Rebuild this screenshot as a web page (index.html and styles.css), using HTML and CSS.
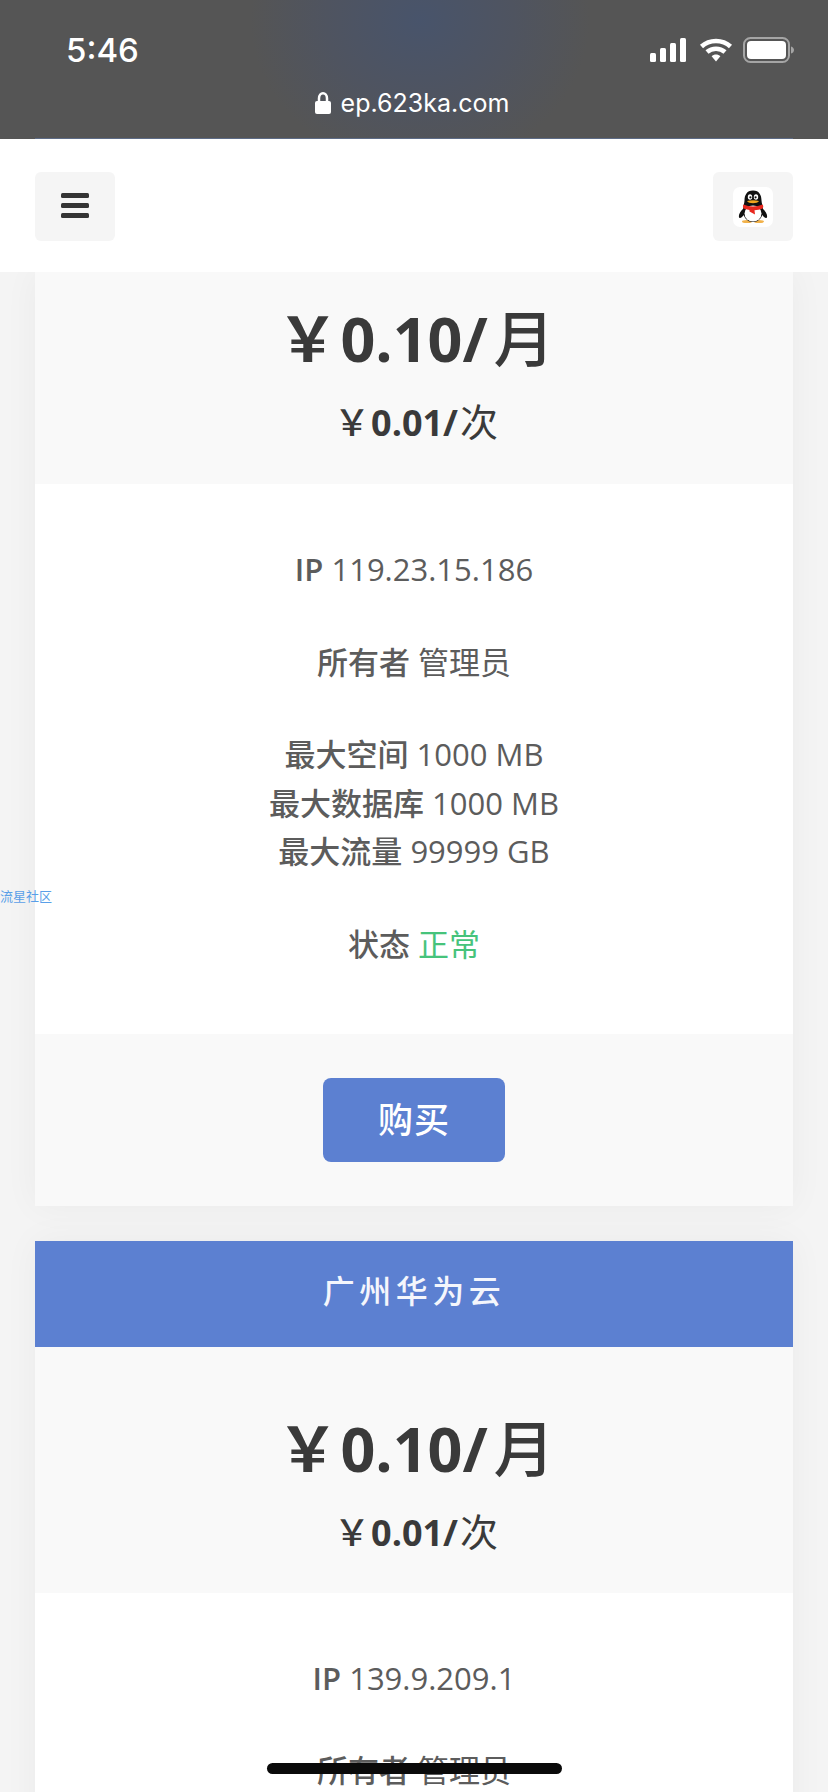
FILE: index.html
```html
<!DOCTYPE html>
<html lang="zh">
<head>
<meta charset="utf-8">
<title>ep.623ka.com</title>
<link rel="stylesheet" href="styles.css">
</head>
<body>
<div class="status">
  <div class="status-row">
    <span class="time">5:46</span>
    <div class="status-icons">
      <svg width="40" height="26" viewBox="0 0 40 26"><rect x="1" y="16" width="6" height="9" rx="1.5"/><rect x="11" y="11" width="6" height="14" rx="1.5"/><rect x="21" y="6" width="6" height="19" rx="1.5"/><rect x="31" y="1" width="6" height="24" rx="1.5"/></svg>
      <svg width="34" height="26" viewBox="0 0 34 26"><path class="wifi" d="M2.5 9.5C10.5 2 23.5 2 31.5 9.5"/><path class="wifi" d="M8 15C13 10.5 21 10.5 26 15"/><path d="M12.6 19.2C15 17 19 17 21.4 19.2L17 24.5Z"/></svg>
      <svg width="52" height="26" viewBox="0 0 52 26"><rect class="bat-frame" x="1" y="1" width="45" height="24" rx="6.5"/><rect x="4" y="4" width="39" height="18" rx="4"/><path class="bat-cap" d="M48 9.5C50 10 51 11.500 51 13C51 14.500 50 16 48 16.500Z"/></svg>
    </div>
  </div>
  <div class="address">
    <svg width="16" height="22" viewBox="0 0 16 22"><path class="lock-loop" d="M4 10V6.500C4 -0.500 12 -0.500 12 6.500V10"/><rect x="0" y="9" width="16" height="13" rx="2"/></svg>
    <span>ep.623ka.com</span>
  </div>
</div>
<header class="topbar">
  <button class="tool" type="button" aria-label="菜单">
    <span class="bars"><i></i><i></i><i></i></span>
  </button>
  <button class="tool" type="button" aria-label="QQ">
    <span class="qq">
      <svg width="30" height="33" viewBox="0 0 30 33">
        <ellipse cx="9" cy="31.500" rx="5" ry="1.500" fill="#f2b24a"/>
        <ellipse cx="21" cy="31.500" rx="5" ry="1.500" fill="#f2b24a"/>
        <path d="M6 18C1 22 0 27 1.500 28C3 28.500 5 26 6.500 24ZM24 18C29 22 30 27 28.500 28C27 28.500 25 26 23.500 24Z" fill="#111"/>
        <path d="M15 0.500C8.500 0.500 6.500 5.500 6.500 10.500C6.500 13 5 16 5 21C5 27 9 32 15 32C21 32 25 27 25 21C25 16 23.500 13 23.500 10.500C23.500 5.500 21.500 0.500 15 0.500Z" fill="#111"/>
        <ellipse cx="15" cy="23.500" rx="8.500" ry="8" fill="#fff"/>
        <ellipse cx="12" cy="7" rx="2.200" ry="2.800" fill="#fff"/>
        <ellipse cx="18" cy="7" rx="2.200" ry="2.800" fill="#fff"/>
        <circle cx="12.400" cy="7.300" r="1.100" fill="#111"/>
        <circle cx="17.600" cy="7.300" r="1.100" fill="#111"/>
        <path d="M9 11C12.500 10 17.500 10 21 11C19.500 14 10.500 14 9 11Z" fill="#f2a51f"/>
        <path d="M5.500 14.500C11 17 19 17 24.500 14.500C25.500 15.500 25.500 17.500 24.500 18.500C22 19.500 19 20 16.500 20.300L17 24.500L11.500 21.500L11.500 20C9 19.500 7 19 5.500 18.500C4.800 17.500 4.800 15.500 5.500 14.500Z" fill="#e8281f"/>
      </svg>
    </span>
  </button>
</header>
<main class="viewport">
  <span class="floating-link">流星社区</span>
  <div class="content">
    <section class="card">
      <div class="price price-clipped">
        <div class="price-month"><span class="yen">&#xFFE5;</span><b>0.10/</b><span class="unit">月</span></div>
        <div class="price-once"><span class="yen">&#xFFE5;</span><b>0.01/</b><span class="unit">次</span></div>
      </div>
      <div class="info">
        <p><b class="latin">IP</b> 119.23.15.186</p>
        <p><b>所有者</b> 管理员</p>
        <p><b>最大空间</b> 1000 MB<br><b>最大数据库</b> 1000 MB<br><b>最大流量</b> 99999 GB</p>
        <p><b>状态</b> <span class="ok">正常</span></p>
      </div>
      <div class="actions"><a class="buy">购买</a></div>
    </section>
    <section class="card">
      <h2 class="card-title">广州华为云</h2>
      <div class="price">
        <div class="price-month"><span class="yen">&#xFFE5;</span><b>0.10/</b><span class="unit">月</span></div>
        <div class="price-once"><span class="yen">&#xFFE5;</span><b>0.01/</b><span class="unit">次</span></div>
      </div>
      <div class="info">
        <p><b class="latin">IP</b> 139.9.209.1</p>
        <p><b>所有者</b> 管理员</p>
      </div>
    </section>
  </div>
  <div class="home-bar"></div>
</main>
</body>
</html>
```
FILE: styles.css
```css
* { box-sizing: border-box; }
html, body { margin: 0; height: 100%; }
body {
  width: 828px;
  height: 1792px;
  overflow: hidden;
  background: #f4f4f4;
  font-family: "Open Sans", "Noto Sans CJK SC", sans-serif;
  color: #5c5c5c;
}
.status {
  position: relative;
  height: 139px;
  background: radial-gradient(ellipse 170px 150px at 420px 20px, #48546b 0%, #4f5460 55%, #555555 100%);
  color: #fff;
  font-family: Inter, "Liberation Sans", sans-serif;
}
.status::after {
  content: "";
  position: absolute;
  left: 35px;
  right: 35px;
  bottom: 0;
  height: 1px;
  background: #5d6b86;
}
.status-row {
  display: flex;
  justify-content: space-between;
  align-items: center;
  height: 74px;
  padding: 26px 33px 0 66px;
}
.time { font-size: 33px; font-weight: 500; color: #fff; }
.status-icons { display: flex; align-items: center; gap: 10px; }
.status-icons svg { fill: #fff; display: block; }
.wifi { fill: none; stroke: #fff; stroke-width: 4.500; }
.bat-frame { fill: none; stroke: #a5a5a5; stroke-width: 2; }
.status-icons .bat-cap { fill: #a5a5a5; }
.address {
  display: flex;
  justify-content: center;
  align-items: center;
  gap: 10px;
  margin-top: 13px;
  font-size: 25px;
  line-height: 32px;
  padding-right: 4px;
}
.address svg { fill: #fff; display: block; }
.lock-loop { fill: none; stroke: #fff; stroke-width: 2.500; }
.topbar {
  height: 133px;
  background: #fff;
  display: flex;
  justify-content: space-between;
  align-items: flex-start;
  padding: 33px 35px 0;
  position: relative;
  z-index: 2;
}
.tool {
  width: 80px;
  height: 69px;
  border: 0;
  padding: 0;
  background: #f5f5f5;
  border-radius: 6px;
  display: flex;
  justify-content: center;
  align-items: center;
}
.bars { display: flex; flex-direction: column; gap: 5px; width: 28px; margin-top: -3px; }
.bars i { display: block; height: 5px; background: #343434; border-radius: 1.500px; }
.qq {
  width: 40px;
  height: 40px;
  background: #fff;
  border-radius: 7px;
  display: flex;
  justify-content: center;
  align-items: center;
}
.qq svg { display: block; }
.viewport {
  position: relative;
  height: 1520px;
  overflow: hidden;
}
.content {
  display: flex;
  flex-direction: column;
  gap: 35px;
  padding: 0 35px;
}
.card {
  background: #fff;
  box-shadow: 0 0 34px rgba(0, 0, 0, 0.045);
}
.card-title {
  margin: 0;
  height: 106px;
  background: #5c80d1;
  color: #f4f6fc;
  font-size: 32px;
  font-weight: 500;
  line-height: 100px;
  letter-spacing: 4.500px;
  text-align: center;
}
.price {
  height: 246px;
  padding: 63px 0 0 4px;
  background: #f9f9f9;
  text-align: center;
  color: #3a3a3a;
}
.price-clipped { height: 212px; padding-top: 28px; }
.price-month { font-size: 61px; line-height: 72px; }
.price-once { font-size: 36px; line-height: 50px; margin-top: 20px; }
.price b { font-weight: 700; }
.yen { font-weight: 700; font-family: "Noto Sans CJK SC", sans-serif; margin-right: 2px; }
.price-once .yen { font-weight: 500; margin-right: 1px; }
.unit { font-weight: 500; font-family: "Noto Sans CJK SC", sans-serif; margin-left: 6px; }
.price-once .unit { font-size: 38px; font-weight: 400; margin-left: 2px; }
.info {
  padding: 61px 0 65px;
  text-align: center;
  font-size: 31px;
  line-height: 48.600px;
}
.info p { margin: 0 0 44px; }
.info p:last-child { margin-bottom: 0; }
.info b { font-weight: 500; }
.info .latin { font-weight: 600; }
.ok { color: #46c37b; }
.actions {
  height: 172px;
  background: #f9f9f9;
  display: flex;
  justify-content: center;
  padding-top: 44px;
}
.buy {
  width: 182px;
  height: 84px;
  background: #5c80d1;
  color: #fff;
  border-radius: 8px;
  font-size: 35px;
  font-weight: 500;
  line-height: 84px;
  text-align: center;
  letter-spacing: 1px;
}
.floating-link {
  position: absolute;
  left: 0;
  top: 615px;
  font-size: 13px;
  line-height: 18px;
  color: #5a9fe8;
  z-index: 3;
}
.home-bar {
  position: absolute;
  left: 267px;
  top: 1491px;
  width: 295px;
  height: 11px;
  border-radius: 6px;
  background: #0a0a0a;
  z-index: 4;
}
```
